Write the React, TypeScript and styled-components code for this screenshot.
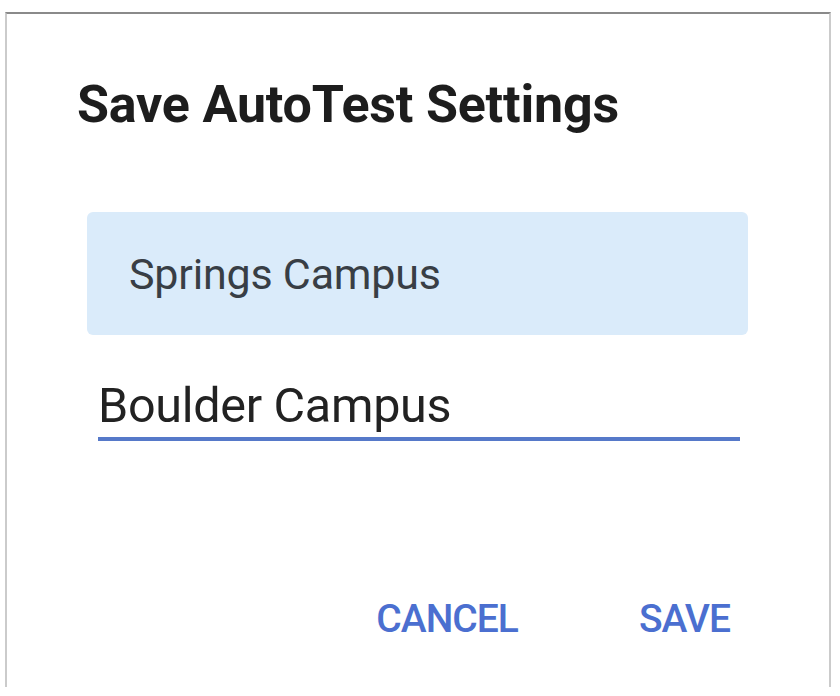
import React from "react";
import styled, { createGlobalStyle } from "styled-components";

const Global = createGlobalStyle`
  html, body { margin: 0; padding: 0; background: #ffffff; }
  body { font-family: Roboto, "Liberation Sans", Arial, sans-serif; }
`;

const Page = styled.div`
  width: 840px;
  height: 696px;
  box-sizing: border-box;
  padding: 12px 9px 9px 5px;
  background: #ffffff;
`;

const Dialog = styled.div`
  box-sizing: border-box;
  height: 100%;
  border-top: 2px solid #8a8a8a;
  border-left: 2px solid #cbcbcb;
  border-right: 2px solid #cbcbcb;
  display: flex;
  flex-direction: column;
  padding: 61px 81px 0 70px;
`;

const Title = styled.h1`
  margin: 0;
  font-family: Roboto, "Liberation Sans", sans-serif;
  font-weight: 700;
  font-size: 52px;
  line-height: 60px;
  color: #1d1d1d;
  letter-spacing: -0.2px;
  white-space: nowrap;
`;

const Option = styled.div`
  margin: 77px 0 0 10px;
  height: 123px;
  background: #daebfa;
  border-radius: 6px;
  display: flex;
  align-items: center;
  padding-left: 42px;
  font-size: 43px;
  letter-spacing: -0.2px;
  color: #383e45;
`;

const Field = styled.div`
  margin: 45px 8px 0 21px;
  padding-bottom: 5px;
  border-bottom: 4px solid #5679c9;
  font-size: 48.5px;
  line-height: 52px;
  letter-spacing: -0.3px;
  color: #222222;
`;

const Actions = styled.div`
  margin-top: auto;
  margin-bottom: 44px;
  display: flex;
  justify-content: flex-end;
  gap: 121px;
  padding-right: 18px;
`;

const TextButton = styled.button`
  border: none;
  background: none;
  padding: 0;
  font-family: "Roboto", "Liberation Sans", sans-serif;
  font-weight: 500;
  font-size: 39px;
  line-height: 48px;
  letter-spacing: -1px;
  color: #4b6fd0;
  cursor: pointer;
`;

export default function App() {
  return (
    <>
      <Global />
      <Page>
        <Dialog>
          <Title>Save AutoTest Settings</Title>
          <Option>Springs Campus</Option>
          <Field>Boulder Campus</Field>
          <Actions>
            <TextButton>CANCEL</TextButton>
            <TextButton>SAVE</TextButton>
          </Actions>
        </Dialog>
      </Page>
    </>
  );
}
